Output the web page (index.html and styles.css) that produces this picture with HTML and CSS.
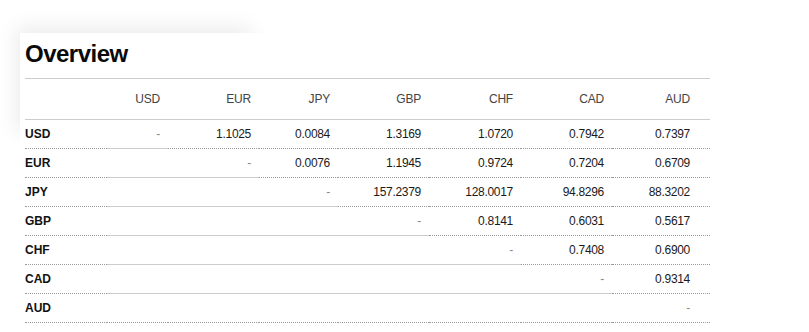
FILE: index.html
```html
<!DOCTYPE html>
<html lang="en">
<head>
<meta charset="utf-8">
<title>Overview</title>
<link rel="stylesheet" href="styles.css">
</head>
<body>
<section class="card">
  <h1 class="title">Overview</h1>
  <table class="matrix">
    <colgroup>
      <col class="c-label"><col class="c-usd"><col class="c-eur"><col class="c-jpy"><col class="c-gbp"><col class="c-chf"><col class="c-cad"><col class="c-aud">
    </colgroup>
    <thead>
      <tr><th></th><th>USD</th><th>EUR</th><th>JPY</th><th>GBP</th><th>CHF</th><th>CAD</th><th>AUD</th></tr>
    </thead>
    <tbody>
      <tr><th class="rh">USD</th><td class="diag">-</td><td>1.1025</td><td>0.0084</td><td>1.3169</td><td>1.0720</td><td>0.7942</td><td>0.7397</td></tr>
      <tr><th class="rh">EUR</th><td class="empty"></td><td class="diag">-</td><td>0.0076</td><td>1.1945</td><td>0.9724</td><td>0.7204</td><td>0.6709</td></tr>
      <tr><th class="rh">JPY</th><td class="empty"></td><td class="empty"></td><td class="diag">-</td><td>157.2379</td><td>128.0017</td><td>94.8296</td><td>88.3202</td></tr>
      <tr><th class="rh">GBP</th><td class="empty"></td><td class="empty"></td><td class="empty"></td><td class="diag">-</td><td>0.8141</td><td>0.6031</td><td>0.5617</td></tr>
      <tr><th class="rh">CHF</th><td class="empty"></td><td class="empty"></td><td class="empty"></td><td class="empty"></td><td class="diag">-</td><td>0.7408</td><td>0.6900</td></tr>
      <tr><th class="rh">CAD</th><td class="empty"></td><td class="empty"></td><td class="empty"></td><td class="empty"></td><td class="empty"></td><td class="diag">-</td><td>0.9314</td></tr>
      <tr><th class="rh">AUD</th><td class="empty"></td><td class="empty"></td><td class="empty"></td><td class="empty"></td><td class="empty"></td><td class="empty"></td><td class="diag">-</td></tr>
    </tbody>
  </table>
</section>
</body>
</html>
```

FILE: styles.css
```css
html {
  margin: 0;
  padding: 0;
  background: #fff;
}

body {
  margin: 0;
  padding: 0;
  font-family: "Liberation Sans", Arial, sans-serif;
  color: #222;
}

.card {
  position: relative;
  margin: 33px 0 0 20px;
  padding: 7px 0 10px 5px;
  width: 685px;
  background: #fff;
}

.card::before {
  content: "";
  position: absolute;
  left: 0;
  top: 0;
  width: 235px;
  height: 105px;
  background: #fff;
  box-shadow: -4px -6px 20px rgba(0, 0, 0, 0.08);
  z-index: -1;
}

.title {
  margin: 0 0 10px;
  font-size: 24px;
  line-height: 28px;
  font-weight: 700;
  letter-spacing: -0.5px;
  color: #0a0a0a;
}

.matrix {
  width: 685px;
  table-layout: fixed;
  border-collapse: separate;
  border-spacing: 0;
  font-size: 12px;
}

.c-label { width: 82px; }
.c-usd { width: 61px; }
.c-eur { width: 91px; }
.c-jpy { width: 79px; }
.c-gbp { width: 91px; }
.c-chf { width: 92px; }
.c-cad { width: 91px; }
.c-aud { width: 98px; }

.matrix thead th {
  padding: 0 8px 0 0;
  line-height: 40px;
  font-weight: 400;
  color: #444;
  text-align: right;
  border-top: 1px solid #ccc;
  border-bottom: 1px solid #ccc;
  letter-spacing: -0.2px;
}

.matrix thead th:last-child,
.matrix td:last-child {
  padding-right: 20px;
}

.matrix .rh {
  padding: 0;
  text-align: left;
  font-weight: 700;
  color: #111;
  line-height: 28px;
  border-bottom: 1px dotted #999;
}

.matrix td {
  padding: 0 8px 0 0;
  line-height: 28px;
  text-align: right;
  color: #1a1a1a;
  letter-spacing: -0.3px;
  border-bottom: 1px dotted #999;
}

.matrix td.diag {
  color: #888;
  border-bottom: 1px solid #ccc;
}

.matrix td.empty {
  border-bottom: 1px solid #ccc;
}

.matrix tr:last-child td {
  border-bottom: 1px dotted #999;
}
```
